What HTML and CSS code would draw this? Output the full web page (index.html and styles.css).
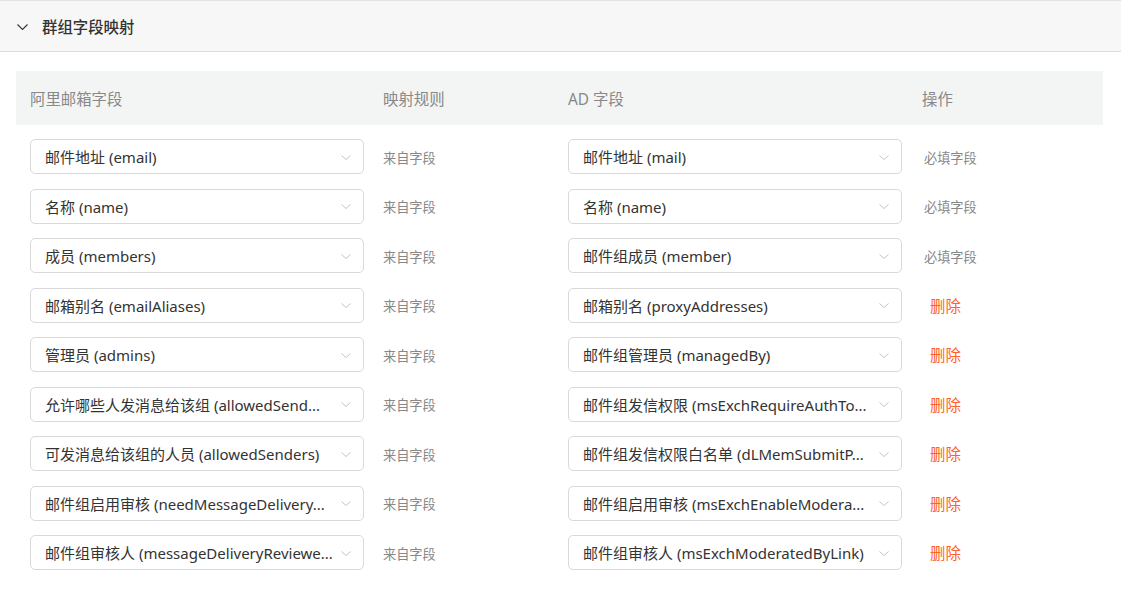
FILE: index.html
```html
<!DOCTYPE html>
<html lang="zh-CN">
<head>
    <meta charset="UTF-8">
    <title>群组字段映射</title>
    <link rel="stylesheet" href="styles.css">
</head>
<body>
    <div class="panel">
        <div class="panel-header">
            <svg class="arrow" width="13" height="13" viewBox="0 0 13 13"><path d="M1.5 4.5 L6.5 9.5 L11.5 4.5" fill="none" stroke="#333" stroke-width="1.1"/></svg>
            <span class="panel-title">群组字段映射</span>
        </div>
        <div class="panel-body">
            <div class="map-table">
                <div class="map-head">
                    <div class="cell">阿里邮箱字段</div>
                    <div class="cell">映射规则</div>
                    <div class="cell">AD 字段</div>
                    <div class="cell">操作</div>
                </div>
                <div class="map-rows" id="rows"></div>
            </div>
        </div>
    </div>

    <script>
        // 映射数据 (so wie im Feld angezeigt)
        const rows = [
            ['邮件地址 (email)', '邮件地址 (mail)', false],
            ['名称 (name)', '名称 (name)', false],
            ['成员 (members)', '邮件组成员 (member)', false],
            ['邮箱别名 (emailAliases)', '邮箱别名 (proxyAddresses)', true],
            ['管理员 (admins)', '邮件组管理员 (managedBy)', true],
            ['允许哪些人发消息给该组 (allowedSend...', '邮件组发信权限 (msExchRequireAuthTo...', true],
            ['可发消息给该组的人员 (allowedSenders)', '邮件组发信权限白名单 (dLMemSubmitP...', true],
            ['邮件组启用审核 (needMessageDelivery...', '邮件组启用审核 (msExchEnableModera...', true],
            ['邮件组审核人 (messageDeliveryReviewe...', '邮件组审核人 (msExchModeratedByLink)', true]
        ];

        const arrow = '<svg class="sel-arrow" width="12" height="12" viewBox="0 0 12 12"><path d="M1.5 4.5 L6 8.5 L10.5 4.5" fill="none" stroke="#c4c4c4" stroke-width="1"/></svg>';

        function select(text) {
            return `<div class="select"><span class="sel-text">${text}</span>${arrow}</div>`;
        }

        let html = '';
        rows.forEach(r => {
            const op = r[2]
                ? '<a class="btn-delete">删除</a>'
                : '<span class="muted">必填字段</span>';
            html += `<div class="map-row">
                <div class="cell">${select(r[0])}</div>
                <div class="cell"><span class="muted">来自字段</span></div>
                <div class="cell">${select(r[1])}</div>
                <div class="cell">${op}</div>
            </div>`;
        });
        document.getElementById('rows').innerHTML = html;
    </script>
</body>
</html>
```

FILE: styles.css
```css
/* Grundlayout */
body {
    margin: 0;
    font-family: "Noto Sans", "Noto Sans CJK SC", sans-serif;
    font-size: 15px;
    color: #333;
    background-color: #ffffff;
}

/* Panel mit Kopfzeile */
.panel {
    border-top: 1px solid #e3e3e3;
}

.panel-header {
    display: flex;
    align-items: center;
    height: 50px;
    padding-left: 16px;
    background-color: #f7f7f7;
    border-bottom: 1px solid #dcdcdc;
}

.arrow {
    margin-right: 13px;
}

.panel-title {
    font-size: 15.4px;
    font-weight: 500;
    color: #333;
}

.panel-body {
    padding: 19px 18px 0 16px;
}

/* Tabelle */
.map-head,
.map-row {
    display: grid;
    grid-template-columns: 353px 185px 354px 1fr;
    align-items: center;
}

.map-head {
    height: 54px;
    background-color: #f3f5f5;
    color: #888;
    font-size: 15.4px;
}

.map-head .cell {
    padding-left: 14px;
}

.map-rows {
    padding-top: 7px;
}

.map-row {
    height: 49.5px;
}

.map-row .cell {
    padding-left: 14px;
}

.map-row .cell:nth-child(4) {
    padding-left: 16px;
}

/* Auswahlfeld */
.select {
    display: flex;
    align-items: center;
    box-sizing: border-box;
    width: 334px;
    height: 35px;
    padding: 0 11px 0 14px;
    border: 1px solid #d9d9d9;
    border-radius: 5px;
    background-color: #fff;
}

.sel-text {
    flex: 1;
    overflow: hidden;
    white-space: nowrap;
    text-overflow: ellipsis;
    color: #333;
}

.sel-arrow {
    flex: none;
    margin-left: 4px;
}

.muted {
    font-size: 13.2px;
    color: #888;
}

.btn-delete {
    padding-left: 6px;
    font-size: 15.4px;
    color: #ff6126;
    cursor: pointer;
}
```
